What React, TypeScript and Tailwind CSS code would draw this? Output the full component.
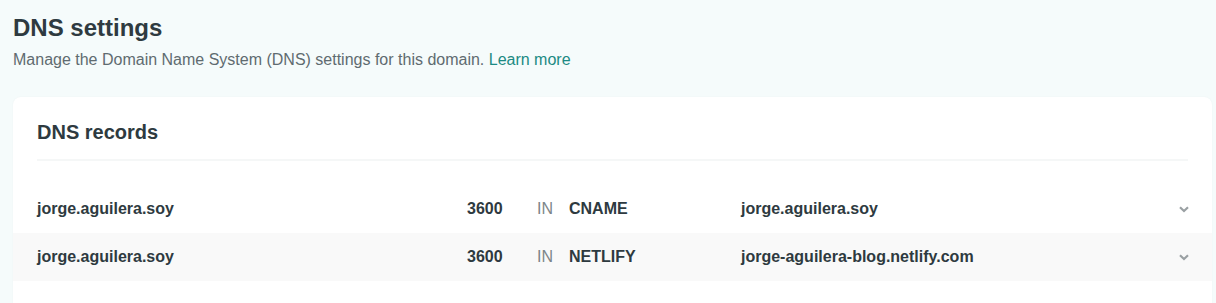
import React from 'react';

const RECORDS = [
  { name: 'jorge.aguilera.soy', ttl: '3600', type: 'CNAME', value: 'jorge.aguilera.soy' },
  { name: 'jorge.aguilera.soy', ttl: '3600', type: 'NETLIFY', value: 'jorge-aguilera-blog.netlify.com' },
];

const Chevron: React.FC = () => (
  <svg width="10" height="7" viewBox="0 0 10 7" fill="none" stroke="#9aa0a3" strokeWidth="2.2">
    <path d="M1 1.2 L5 5 L9 1.2" />
  </svg>
);

const App: React.FC = () => {
  return (
    <div className="min-h-screen bg-[#f5fbfb] px-[13px] pt-[14px] text-[#2e3a40]" style={{ fontFamily: '"Liberation Sans", Arial, sans-serif' }}>
      {/* Header */}
      <h1 className="text-[24px] font-bold leading-[28px]">DNS settings</h1>
      <p className="mt-[8px] text-[16px] leading-[20px] text-[#5f6b70]">
        Manage the Domain Name System (DNS) settings for this domain.{' '}
        <a className="text-[#1b8a83]">Learn more</a>
      </p>

      {/* Card */}
      <section className="mt-[27px] w-[1199px] rounded-lg bg-white pb-[40px] shadow-[0_0_2px_rgba(0,0,0,0.04)]">
        <div className="mx-6 border-b-2 border-[#f5f7f7] pt-[23px] pb-[15px]">
          <h2 className="text-[20px] font-bold leading-[24px]">DNS records</h2>
        </div>

        <div className="mt-[24px]">
          {RECORDS.map((r, i) => (
            <div
              key={i}
              className={`flex h-12 items-center pl-6 pr-[23px] text-[16px] font-bold ${i % 2 === 1 ? 'bg-[#f9f9f9]' : ''}`}
            >
              <span className="w-[430px]">{r.name}</span>
              <span className="w-[70px]">{r.ttl}</span>
              <span className="w-[32px] font-normal text-[#7d8589]">IN</span>
              <span className="w-[172px]">{r.type}</span>
              <span className="flex-1">{r.value}</span>
              <Chevron />
            </div>
          ))}
        </div>
      </section>
    </div>
  );
};

export default App;
